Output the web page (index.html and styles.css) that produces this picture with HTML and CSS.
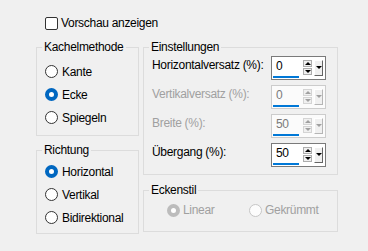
FILE: index.html
```html
<!DOCTYPE html>
<html lang="de">
<head>
  <meta charset="UTF-8">
  <title>Kacheln</title>
  <link rel="stylesheet" href="styles.css">
</head>
<body>
  <div class="page">
    <div class="check-row"><span class="check"></span>Vorschau anzeigen</div>

    <div class="columns">
      <div class="col col-left">
        <fieldset class="group group-method">
          <legend>Kachelmethode</legend>
          <div class="group-body">
            <div class="option"><span class="radio"></span>Kante</div>
            <div class="option"><span class="radio checked"></span>Ecke</div>
            <div class="option"><span class="radio"></span>Spiegeln</div>
          </div>
        </fieldset>

        <fieldset class="group group-dir">
          <legend>Richtung</legend>
          <div class="group-body">
            <div class="option"><span class="radio checked"></span>Horizontal</div>
            <div class="option"><span class="radio"></span>Vertikal</div>
            <div class="option"><span class="radio"></span>Bidirektional</div>
          </div>
        </fieldset>
      </div>

      <div class="col col-right">
        <fieldset class="group group-settings">
          <legend>Einstellungen</legend>
          <div class="group-body fields">
            <div class="field">
              <span class="field-label">Horizontalversatz (%):</span>
              <div class="spin">
                <div class="spin-edit"><span class="spin-value">0</span><span class="spin-bar"></span></div>
                <div class="spin-arrows"><span class="spin-btn up"></span><span class="spin-btn down"></span></div>
                <span class="spin-drop"></span>
              </div>
            </div>
            <div class="field disabled">
              <span class="field-label">Vertikalversatz (%):</span>
              <div class="spin">
                <div class="spin-edit"><span class="spin-value">0</span><span class="spin-bar"></span></div>
                <div class="spin-arrows"><span class="spin-btn up"></span><span class="spin-btn down"></span></div>
                <span class="spin-drop"></span>
              </div>
            </div>
            <div class="field disabled">
              <span class="field-label">Breite (%):</span>
              <div class="spin">
                <div class="spin-edit"><span class="spin-value">50</span><span class="spin-bar"></span></div>
                <div class="spin-arrows"><span class="spin-btn up"></span><span class="spin-btn down"></span></div>
                <span class="spin-drop"></span>
              </div>
            </div>
            <div class="field">
              <span class="field-label">Übergang (%):</span>
              <div class="spin">
                <div class="spin-edit"><span class="spin-value">50</span><span class="spin-bar"></span></div>
                <div class="spin-arrows"><span class="spin-btn up"></span><span class="spin-btn down"></span></div>
                <span class="spin-drop"></span>
              </div>
            </div>
          </div>
        </fieldset>

        <fieldset class="group group-corner">
          <legend>Eckenstil</legend>
          <div class="group-body corner-options">
            <div class="option disabled"><span class="radio checked"></span>Linear</div>
            <div class="option disabled"><span class="radio"></span>Gekrümmt</div>
          </div>
        </fieldset>
      </div>
    </div>
  </div>
</body>
</html>
```

FILE: styles.css
```css
body {
  margin: 0;
  background-color: #f0f0f0;
  color: #000;
  font-family: 'Liberation Sans', Arial, sans-serif;
  font-size: 12px;
  line-height: 16px;
  letter-spacing: -0.3px;
  white-space: nowrap;
}
.page {
  padding: 15px 0 0 36px;
}
.check-row {
  display: flex;
  align-items: center;
  gap: 3px;
  padding-left: 9px;
  height: 16px;
}
.check {
  width: 13px;
  height: 13px;
  box-sizing: border-box;
  border: 1px solid #333;
  border-radius: 2px;
  background: #fff;
}
.columns {
  display: flex;
  gap: 4px;
  margin-top: 8px;
}
.col {
  display: flex;
  flex-direction: column;
}
.col-left {
  width: 103px;
  gap: 6px;
}
.col-right {
  width: 195px;
  gap: 7px;
}
.group {
  margin: 0;
  padding: 0;
  min-width: 0;
  border: 1px solid #dcdcdc;
}
.group legend {
  margin-left: 5px;
  padding: 0 2px;
}
.option {
  display: flex;
  align-items: center;
  gap: 4px;
  height: 23px;
}
.group-method .group-body {
  padding: 5px 0 6px 8px;
}
.group-dir .group-body {
  padding: 2px 0 4px 8px;
}
.radio {
  flex: none;
  width: 13px;
  height: 13px;
  box-sizing: border-box;
  border: 1px solid #333;
  border-radius: 50%;
  background: #fff;
}
.radio.checked {
  border: 4px solid #0067c0;
}
.option.disabled {
  color: #a0a0a0;
}
.option.disabled .radio {
  border-color: #c6c6c6;
  background: #fcfcfc;
}
.option.disabled .radio.checked {
  border: 4px solid #bcbcbc;
  background: #fff;
}
.fields {
  padding: 1px 0 7px 8px;
  display: flex;
  flex-direction: column;
  gap: 5px;
}
.field {
  display: flex;
}
.field-label {
  width: 119px;
  margin-top: 1px;
}
.field.disabled .field-label {
  color: #a0a0a0;
}
.spin {
  display: flex;
  width: 55px;
  height: 24px;
  box-sizing: border-box;
  border: 1px solid #7a7a7a;
  background: #fff;
}
.spin-edit {
  width: 29px;
  display: flex;
  flex-direction: column;
}
.spin-value {
  padding: 1px 0 0 4px;
}
.spin-bar {
  margin: 2px 0 0 1px;
  width: 26px;
  height: 2px;
  background: #0078d7;
}
.spin-arrows {
  display: flex;
  flex-direction: column;
  gap: 1px;
  margin: 3px 0 0 2px;
}
.spin-btn {
  position: relative;
  width: 9px;
  height: 7px;
  box-sizing: border-box;
  border: 1px solid #adadad;
  background: #f0f0f0;
}
.spin-btn::after {
  content: "";
  position: absolute;
  left: 1px;
  border-left: 3px solid transparent;
  border-right: 3px solid transparent;
}
.spin-btn.up::after {
  top: 1px;
  border-bottom: 3px solid #000;
}
.spin-btn.down::after {
  top: 1px;
  border-top: 3px solid #000;
}
.spin-drop {
  position: relative;
  width: 9px;
  height: 16px;
  margin: 3px 0 0 2px;
  box-sizing: border-box;
  border: 1px solid;
  border-color: #fff #646464 #646464 #fff;
  background: #f0f0f0;
}
.spin-drop::after {
  content: "";
  position: absolute;
  left: 1px;
  top: 5px;
  border-left: 3px solid transparent;
  border-right: 3px solid transparent;
  border-top: 3px solid #000;
}
.field.disabled .spin {
  border-color: #cccccc;
  background: #fbfbfb;
}
.field.disabled .spin-value {
  color: #7a7a7a;
}
.field.disabled .spin-btn {
  border-color: #d4d4d4;
}
.field.disabled .spin-btn.up::after {
  border-bottom-color: #a0a0a0;
}
.field.disabled .spin-btn.down::after {
  border-top-color: #a0a0a0;
}
.field.disabled .spin-drop {
  border-color: #fff #b5b5b5 #b5b5b5 #fff;
}
.field.disabled .spin-drop::after {
  border-top-color: #a0a0a0;
}
.corner-options {
  display: grid;
  grid-template-columns: 82px auto;
  padding: 1px 0 10px 23px;
}
.corner-options .option {
  gap: 3px;
  height: 22px;
}
```
